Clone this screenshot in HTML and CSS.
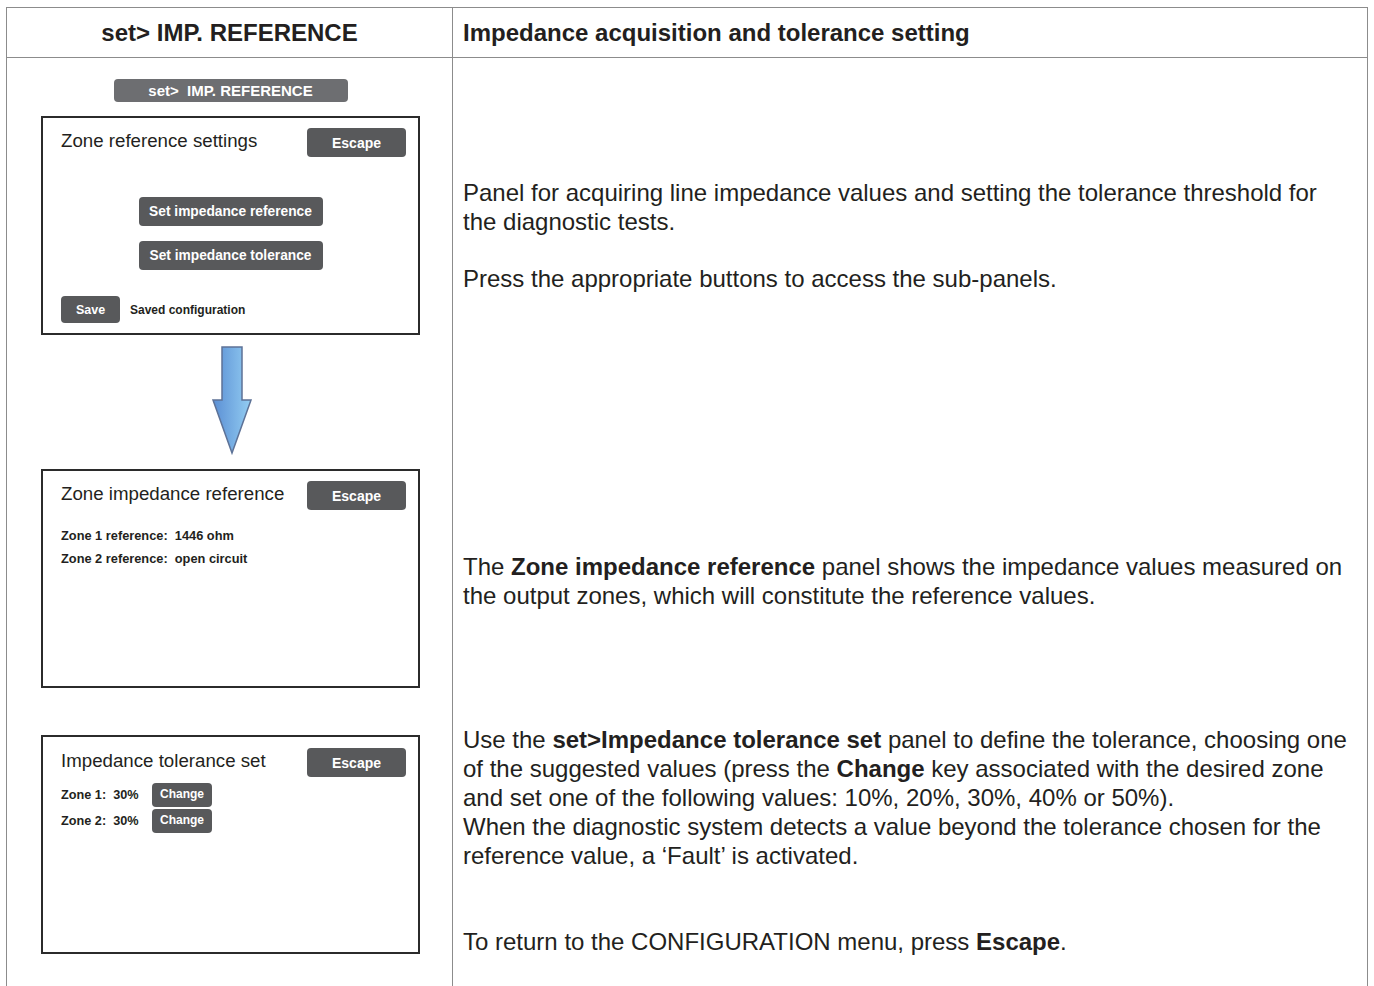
FILE: index.html
```html
<!DOCTYPE html>
<html>
<head>
    <title>set&gt; IMP. REFERENCE</title>
    <link rel="stylesheet" href="styles.css">
</head>
<body>
    <div class="sheet">
        <div class="cell head-left">set&gt; IMP. REFERENCE</div>
        <div class="cell head-right">Impedance acquisition and tolerance setting</div>

        <div class="cell body-left">
            <div class="pill">set&gt;  IMP. REFERENCE</div>

            <!-- Main panel -->
            <div class="panel">
                <div class="panel-top">
                    <span class="panel-title">Zone reference settings</span>
                    <span class="btn btn-escape">Escape</span>
                </div>
                <div class="menu">
                    <span class="btn btn-wide">Set impedance reference</span>
                    <span class="btn btn-wide">Set impedance tolerance</span>
                </div>
                <div class="save-row">
                    <span class="btn btn-save">Save</span>
                    <span class="note">Saved configuration</span>
                </div>
            </div>

            <svg class="arrow" width="42" height="110" viewBox="0 0 42 110">
                <defs>
                    <linearGradient id="arrow-fill" x1="0" y1="0" x2="1" y2="0">
                        <stop offset="0" stop-color="#5b8fd4"/>
                        <stop offset="1" stop-color="#93cdf2"/>
                    </linearGradient>
                </defs>
                <path d="M11 1 H31 V54 H40 L21 107 L2 54 H11 Z" fill="url(#arrow-fill)" stroke="#5d7297" stroke-width="1.5" stroke-linejoin="miter"/>
            </svg>

            <!-- Reference sub-panel -->
            <div class="panel panel-ref">
                <div class="panel-top">
                    <span class="panel-title">Zone impedance reference</span>
                    <span class="btn btn-escape">Escape</span>
                </div>
                <div class="values">
                    <div>Zone 1 reference:&nbsp; 1446 ohm</div>
                    <div>Zone 2 reference:&nbsp; open circuit</div>
                </div>
            </div>

            <!-- Tolerance sub-panel -->
            <div class="panel panel-tol">
                <div class="panel-top">
                    <span class="panel-title">Impedance tolerance set</span>
                    <span class="btn btn-escape">Escape</span>
                </div>
                <div class="zones">
                    <div class="zone-row">
                        <span class="zone-label">Zone 1:&nbsp; 30%</span>
                        <span class="btn btn-change">Change</span>
                    </div>
                    <div class="zone-row">
                        <span class="zone-label">Zone 2:&nbsp; 30%</span>
                        <span class="btn btn-change">Change</span>
                    </div>
                </div>
            </div>
        </div>

        <div class="cell body-right">
            <p class="p-intro">Panel for acquiring line impedance values and setting the tolerance threshold for<br>the diagnostic tests.</p>
            <p class="p-press">Press the appropriate buttons to access the sub-panels.</p>
            <p class="p-ref">The <b>Zone impedance reference</b> panel shows the impedance values measured on<br>the output zones, which will constitute the reference values.</p>
            <p class="p-tol">Use the <b>set&gt;Impedance tolerance set</b> panel to define the tolerance, choosing one<br>of the suggested values (press the <b>Change</b> key associated with the desired zone<br>and set one of the following values: 10%, 20%, 30%, 40% or 50%).<br>When the diagnostic system detects a value beyond the tolerance chosen for the<br>reference value, a ‘Fault’ is activated.</p>
            <p class="p-esc">To return to the CONFIGURATION menu, press <b>Escape</b>.</p>
        </div>
    </div>
</body>
</html>
```

FILE: styles.css
```css
html, body {
    margin: 0;
    overflow: hidden; /* page is cut at the bottom */
    background: #fff;
}

body {
    font-family: 'Liberation Sans', Arial, sans-serif;
    color: #231f20;
}

.sheet {
    margin: 7px 6px 0 6px;
    border: 1px solid #8c8c8c;
    border-bottom: none;
    display: grid;
    grid-template-columns: 446px 1fr;
    grid-template-rows: 50px 1000px;
}

.cell {
    box-sizing: border-box;
}

.head-left,
.head-right {
    border-bottom: 1px solid #8c8c8c;
    font-size: 24px;
    font-weight: bold;
    display: flex;
    align-items: center;
    padding-top: 1px;
}

.head-left {
    border-right: 1px solid #8c8c8c;
    justify-content: center;
}

.head-right {
    padding-left: 10px;
}

.body-left {
    border-right: 1px solid #8c8c8c;
    display: flex;
    flex-direction: column;
    align-items: center;
    padding-top: 21px;
    padding-left: 2px;
}

.pill {
    width: 234px;
    height: 23px;
    box-sizing: border-box;
    background-color: #6d6e71;
    border-radius: 4px;
    color: #fff;
    font-size: 15px;
    font-weight: bold;
    line-height: 23px;
    text-align: center;
    white-space: pre;
}

.panel {
    width: 379px;
    height: 219px;
    box-sizing: border-box;
    border: 2px solid #2b2b2b;
    padding: 10px 12px 0 18px;
    margin-top: 14px;
    display: flex;
    flex-direction: column;
}

.panel-top {
    display: flex;
    justify-content: space-between;
    align-items: center;
    height: 29px;
}

.panel-title {
    font-size: 18.7px;
    margin-top: -3px;
}

.btn {
    display: inline-flex;
    align-items: center;
    justify-content: center;
    box-sizing: border-box;
    background-color: #58595b;
    border-radius: 4px;
    color: #fff;
    font-weight: bold;
}

.btn-escape {
    width: 99px;
    height: 29px;
    font-size: 14px;
}

.menu {
    display: flex;
    flex-direction: column;
    align-items: center;
    gap: 15px;
    margin-top: 40px;
    padding-right: 6px;
}

.btn-wide {
    width: 184px;
    height: 29px;
    font-size: 13.75px;
}

.save-row {
    display: flex;
    align-items: center;
    margin-top: 26px;
}

.btn-save {
    width: 59px;
    height: 27px;
    font-size: 12.5px;
}

.note {
    margin-left: 10px;
    font-size: 12px;
    font-weight: bold;
}

.arrow {
    display: block;
    margin: 11px 0 0 2px;
}

.arrow + .panel {
    margin-top: 13px;
}

.values {
    margin-top: 14px;
    font-size: 12.8px;
    font-weight: bold;
    line-height: 23px;
}

.panel-tol {
    margin-top: 47px;
    padding-top: 11px;
}

.zones {
    margin-top: 6px;
    display: flex;
    flex-direction: column;
    gap: 2px;
}

.zone-row {
    display: flex;
    align-items: center;
}

.zone-label {
    width: 91px;
    font-size: 12.7px;
    font-weight: bold;
}

.btn-change {
    width: 60px;
    height: 24px;
    font-size: 12px;
    padding-bottom: 3px;
}

.body-right {
    padding-left: 10px;
    font-size: 24px;
    line-height: 29px;
}

.body-right p {
    margin: 0;
    white-space: nowrap;
}

.p-intro { margin-top: 120px !important; }
.p-press { margin-top: 28px !important; }
.p-ref   { margin-top: 259px !important; }
.p-tol   { margin-top: 115px !important; }
.p-esc   { margin-top: 57px !important; }
```
